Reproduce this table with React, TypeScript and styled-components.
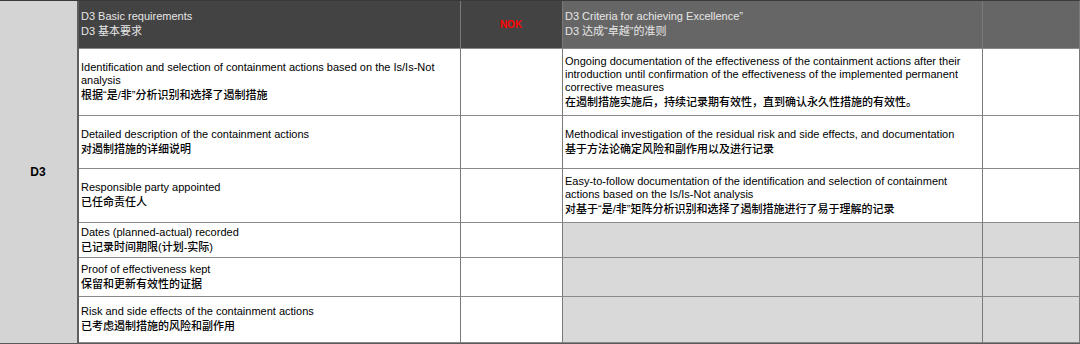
import React from "react";
import styled, { createGlobalStyle } from "styled-components";

const Global = createGlobalStyle`
  html, body { margin: 0; padding: 0; background: #ffffff; }
  body { font-family: "Liberation Sans", Arial, "Noto Sans CJK SC", sans-serif; }
`;

const Sheet = styled.div`
  display: grid;
  grid-template-columns: 79px 382px 102px 420px 97px;
  grid-template-rows: 48px 67px 53px 54px 35px 39px 46px;
  width: 1080px;
  height: 344px;
  box-sizing: border-box;
  border-top: 1px solid #3a3a3a;
  border-bottom: 2px solid #5a5a5a;
  border-right: 1px solid #5a5a5a;
  font-size: 11px;
  line-height: 13px;
`;

const Cell = styled.div<{ $bg?: string; $color?: string; $center?: boolean }>`
  box-sizing: border-box;
  display: flex;
  flex-direction: column;
  justify-content: center;
  align-items: ${(p) => (p.$center ? "center" : "flex-start")};
  padding: 0 3px 0 2px;
  background: ${(p) => p.$bg ?? "#ffffff"};
  color: ${(p) => p.$color ?? "#000000"};
  border-right: 1px solid #7a7a7a;
  border-bottom: 1px solid #8a8a8a;
`;

const Label = styled(Cell)`
  grid-row: 1 / -1;
  grid-column: 1;
  background: #d4d4d4;
  border-right: 2px solid #5e5e5e;
  border-bottom: none;
  font-weight: bold;
  font-size: 12px;
`;

const Zh = styled.span<{ $light?: boolean }>`
  font-family: "Liberation Sans", "Noto Sans CJK SC", sans-serif;
  font-size: 11px;
  line-height: 16px;
  font-weight: ${(p) => (p.$light ? 400 : 500)};
`;

const En = styled.span`
  display: block;
`;

const Nok = styled.span`
  color: #ff0000;
  font-weight: bold;
  font-size: 10px;
`;

type Row = { en: string; zh: string; exEn?: string; exZh?: string };

const rows: Row[] = [
  {
    en: "Identification and selection of containment actions based on the Is/Is-Not analysis",
    zh: "根据\u201c是/非\u201d分析识别和选择了遏制措施",
    exEn:
      "Ongoing documentation of the effectiveness of the containment actions after their introduction until confirmation of the effectiveness of the implemented permanent corrective measures",
    exZh: "在遏制措施实施后，持续记录期有效性，直到确认永久性措施的有效性。",
  },
  {
    en: "Detailed description of the containment actions",
    zh: "对遏制措施的详细说明",
    exEn: "Methodical investigation of the residual risk and side effects, and documentation",
    exZh: "基于方法论确定风险和副作用以及进行记录",
  },
  {
    en: "Responsible party appointed",
    zh: "已任命责任人",
    exEn:
      "Easy-to-follow documentation of the identification and selection of containment actions based on the Is/Is-Not analysis",
    exZh: "对基于\u201c是/非\u201d矩阵分析识别和选择了遏制措施进行了易于理解的记录",
  },
  { en: "Dates (planned-actual) recorded", zh: "已记录时间期限(计划-实际)" },
  { en: "Proof of effectiveness kept", zh: "保留和更新有效性的证据" },
  { en: "Risk and side effects of the containment actions", zh: "已考虑遏制措施的风险和副作用" },
];

export default function App() {
  return (
    <>
      <Global />
      <Sheet>
        <Label $center>D3</Label>
        <Cell $bg="#434343" $color="#e6e6e6">
          <En>D3 Basic requirements</En>
          <Zh $light>D3 基本要求</Zh>
        </Cell>
        <Cell $bg="#434343" $center>
          <Nok>NOK</Nok>
        </Cell>
        <Cell $bg="#666666" $color="#e6e6e6">
          <En>D3 Criteria for achieving Excellence”</En>
          <Zh $light>D3 达成“卓越”的准则</Zh>
        </Cell>
        <Cell $bg="#666666" />
        {rows.map((r, i) => (
          <React.Fragment key={i}>
            <Cell>
              <En>{r.en}</En>
              <Zh>{r.zh}</Zh>
            </Cell>
            <Cell />
            {r.exEn ? (
              <Cell>
                <En>{r.exEn}</En>
                <Zh>{r.exZh}</Zh>
              </Cell>
            ) : (
              <Cell $bg="#d9d9d9" />
            )}
            <Cell $bg={r.exEn ? "#ffffff" : "#d9d9d9"} />
          </React.Fragment>
        ))}
      </Sheet>
    </>
  );
}
